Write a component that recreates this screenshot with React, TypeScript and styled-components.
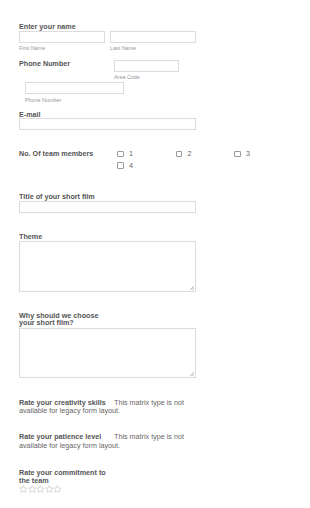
import React from "react";
import styled, { createGlobalStyle } from "styled-components";

const Global = createGlobalStyle`
  html, body { margin: 0; padding: 0; background: #fff; }
  body { font-family: "Liberation Sans", Arial, sans-serif; }
`;

const Form = styled.form`
  padding: 23px 0 0 19px;
  width: 291px;
  box-sizing: border-box;
  color: #555;
`;

const Question = styled.div<{ $mt?: number }>`
  margin-top: ${(p) => p.$mt ?? 0}px;
`;

const Label = styled.div<{ $w?: number }>`
  width: ${(p) => p.$w ?? 95}px;
  flex: none;
  font-size: 7.2px;
  line-height: 7.5px;
  font-weight: bold;
  color: #555;
`;

const TextInput = styled.input<{ $w: number }>`
  display: block;
  width: ${(p) => p.$w}px;
  height: 12px;
  margin: 0;
  padding: 0;
  box-sizing: border-box;
  border: 1px solid #dcdcdc;
  background: #fff;
  outline: none;
`;

const TextArea = styled.textarea<{ $h: number; $mt?: number }>`
  display: block;
  width: 177px;
  height: ${(p) => p.$h}px;
  margin: ${(p) => p.$mt ?? 0}px 0 0 0;
  padding: 0;
  box-sizing: border-box;
  border: 1px solid #dcdcdc;
  outline: none;
  resize: none;
  background-color: #fff;
  background-image: linear-gradient(
    135deg,
    transparent 0 48%,
    #b5b5b5 48% 58%,
    transparent 58% 72%,
    #b5b5b5 72% 82%,
    transparent 82%
  );
  background-repeat: no-repeat;
  background-size: 4px 4px;
  background-position: right 1px bottom 1px;
`;

const SubLabel = styled.div`
  margin-top: 2.5px;
  font-size: 5.4px;
  line-height: 6px;
  color: #999;
`;

const FieldPair = styled.div`
  display: flex;
  gap: 5px;
`;

const Field = styled.div<{ $ml?: number; $mt?: number }>`
  margin-left: ${(p) => p.$ml ?? 0}px;
  margin-top: ${(p) => p.$mt ?? 0}px;
`;

const InlineRow = styled.div`
  display: flex;
  align-items: flex-start;
`;

const CheckGrid = styled.div`
  display: grid;
  grid-template-columns: repeat(3, 58.5px);
  row-gap: 4px;
`;

const CheckOption = styled.label`
  display: flex;
  align-items: center;
  gap: 5.5px;
  font-size: 7.2px;
  line-height: 7.5px;
  color: #666;
`;

const Box = styled.span`
  width: 4.5px;
  height: 4.5px;
  border: 0.8px solid #999;
  border-radius: 1px;
  background: #fff;
  flex: none;
`;

const Matrix = styled.div<{ $mt: number }>`
  margin-top: ${(p) => p.$mt}px;
  width: 177px;
  font-size: 7.2px;
  line-height: 8.7px;
  color: #666;
`;

const MatrixLabel = styled.span`
  display: inline-block;
  width: 95px;
  font-weight: bold;
  color: #555;
`;

const MatrixNote = styled.span``;

const Stars = styled.div`
  display: flex;
  margin-top: 0.7px;
  height: 8px;
`;

const Star = () => (
  <svg width="8.6" height="8" viewBox="0 0 20 19">
    <path
      d="M10 1.2 L12.6 6.8 L18.6 7.4 L14.1 11.5 L15.4 17.5 L10 14.4 L4.6 17.5 L5.9 11.5 L1.4 7.4 L7.4 6.8 Z"
      fill="#fff"
      stroke="#c8c8c8"
      strokeWidth="1.6"
      strokeLinejoin="round"
    />
  </svg>
);

export default function App() {
  return (
    <>
      <Global />
      <Form onSubmit={(e) => e.preventDefault()}>
        <Question>
          <Label>Enter your name</Label>
          <FieldPair>
            <Field>
              <TextInput $w={86} />
              <SubLabel>First Name</SubLabel>
            </Field>
            <Field>
              <TextInput $w={86} />
              <SubLabel>Last Name</SubLabel>
            </Field>
          </FieldPair>
        </Question>

        <Question $mt={8.5}>
          <InlineRow>
            <Label>Phone Number</Label>
            <Field>
              <TextInput $w={65} />
              <SubLabel>Area Code</SubLabel>
            </Field>
          </InlineRow>
          <Field $ml={6} $mt={2}>
            <TextInput $w={99} />
            <SubLabel>Phone Number</SubLabel>
          </Field>
        </Question>

        <Question $mt={8}>
          <Label>E-mail</Label>
          <TextInput $w={177} />
        </Question>

        <Question $mt={20}>
          <InlineRow>
            <Label $w={98}>No. Of team members</Label>
            <CheckGrid>
              {["1", "2", "3", "4"].map((n) => (
                <CheckOption key={n}>
                  <Box />
                  {n}
                </CheckOption>
              ))}
            </CheckGrid>
          </InlineRow>
        </Question>

        <Question $mt={24}>
          <Label>Title of your short film</Label>
          <TextInput $w={177} />
        </Question>

        <Question $mt={20.5}>
          <Label>Theme</Label>
          <TextArea $h={51} />
        </Question>

        <Question $mt={20}>
          <Label>Why should we choose your short film?</Label>
          <TextArea $h={50} $mt={1.5} />
        </Question>

        <Matrix $mt={20.5}>
          <MatrixLabel>Rate your creativity skills</MatrixLabel>
          <MatrixNote>This matrix type is not</MatrixNote>{" "}
          <MatrixNote>available for legacy form layout.</MatrixNote>
        </Matrix>

        <Matrix $mt={17.5}>
          <MatrixLabel>Rate your patience level</MatrixLabel>
          <MatrixNote>This matrix type is not</MatrixNote>{" "}
          <MatrixNote>available for legacy form layout.</MatrixNote>
        </Matrix>

        <Question $mt={18.5}>
          <Label>Rate your commitment to the team</Label>
          <Stars>
            {[0, 1, 2, 3, 4].map((i) => (
              <Star key={i} />
            ))}
          </Stars>
        </Question>
      </Form>
    </>
  );
}
